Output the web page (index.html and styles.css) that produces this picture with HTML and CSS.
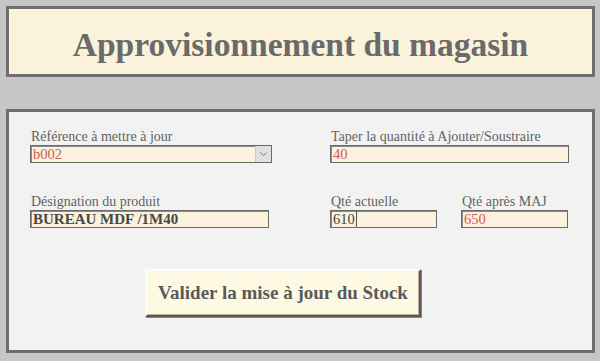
FILE: index.html
```html
<!DOCTYPE html>
<html lang="fr">
<head>
<meta charset="utf-8">
<link rel="stylesheet" href="styles.css">
</head>
<body>
<header class="title-box"><h1>Approvisionnement du magasin</h1></header>
<main class="panel">
  <div class="row row-top">
    <div class="field field-ref">
      <label>Référence à mettre à jour</label>
      <div class="input select red">
        <span class="val">b002</span>
        <span class="arrow"><svg width="9" height="6" viewBox="0 0 9 6"><path d="M1.5 1.5 L4.5 4.5 L7.5 1.5" fill="none" stroke="#777" stroke-width="1"/></svg></span>
      </div>
    </div>
    <div class="field field-qty">
      <label>Taper la quantité à Ajouter/Soustraire</label>
      <div class="input red"><span class="val">40</span></div>
    </div>
  </div>
  <div class="row row-bottom">
    <div class="field field-des">
      <label>Désignation du produit</label>
      <div class="input dark"><span class="val">BUREAU MDF /1M40</span></div>
    </div>
    <div class="pair">
      <div class="field field-small">
        <label>Qté actuelle</label>
        <div class="input plain"><span class="val caret">610</span></div>
      </div>
      <div class="field field-small">
        <label>Qté après MAJ</label>
        <div class="input red"><span class="val">650</span></div>
      </div>
    </div>
  </div>
  <div class="btn-row"><button class="btn">Valider la mise à jour du Stock</button></div>
</main>
</body>
</html>
```
FILE: styles.css
```css
* { box-sizing: border-box; }
html, body { margin: 0; padding: 0; }
body {
  background: #c6c6c6;
  width: 600px;
  height: 361px;
  padding: 6px 5px 0 6px;
  font-family: "Liberation Serif", "DejaVu Serif", serif;
  overflow: hidden;
}
.title-box {
  height: 71px;
  background: #faf2db;
  border: 3px solid #6e6e6e;
  box-shadow: inset 1px 1px 0 #fffbe9;
  display: flex;
  align-items: center;
  justify-content: center;
}
.title-box h1 {
  margin: 0;
  font-size: 33.5px;
  font-weight: bold;
  color: #6a6a6a;
  padding-top: 7px;
}
.panel {
  margin-top: 32px;
  height: 244px;
  background: #f2f2f2;
  border: 3px solid #6e6e6e;
  padding: 17px 0 0 21px;
  display: flex;
  flex-direction: column;
}
.row { display: flex; }
.row-bottom { margin-top: 31px; }
.field { display: flex; flex-direction: column; }
.field label {
  font-size: 14px;
  line-height: 16px;
  color: #626262;
  font-weight: normal;
  white-space: nowrap;
  padding-left: 1px;
}
.field-ref { width: 242px; margin-right: 58px; }
.field-qty { width: 239px; }
.field-des { width: 239px; margin-right: 61px; }
.pair { display: flex; gap: 24px; }
.field-small { width: 107px; }
.input {
  height: 18px;
  background: #faf2dc;
  border: 1px solid #6a6a6a;
  box-shadow: inset 1px 1px 0 #8a8a8a;
  display: flex;
  align-items: center;
  font-size: 14.5px;
  padding-left: 2px;
  position: relative;
}
.input .val { line-height: 16px; }
.red { color: #d0595a; }
.dark { color: #474747; font-weight: bold; font-size: 15px; }
.plain { color: #444; }
.caret { border-right: 1px solid #555; padding-right: 1px; height: 16px; }
.select { padding-right: 0; }
.select .val { flex: 1; }
.arrow {
  width: 16px;
  height: 16px;
  background: #e0e0e0;
  border-left: 1px solid #c8c8c8;
  display: flex;
  align-items: center;
  justify-content: center;
}
.btn-row { margin-top: 41px; padding-left: 115px; }
.btn {
  width: 276px;
  height: 48px;
  background: #fef9e3;
  border: 2px solid;
  border-color: #fffdf0 #5e5a50 #5e5a50 #fffdf0;
  box-shadow: 1px 1px 0 #8a8678, inset -1px -1px 0 #b5af9c;
  font-family: "Liberation Serif", "DejaVu Serif", serif;
  font-weight: bold;
  font-size: 19px;
  color: #5a5a5a;
  padding: 0;
}
```
